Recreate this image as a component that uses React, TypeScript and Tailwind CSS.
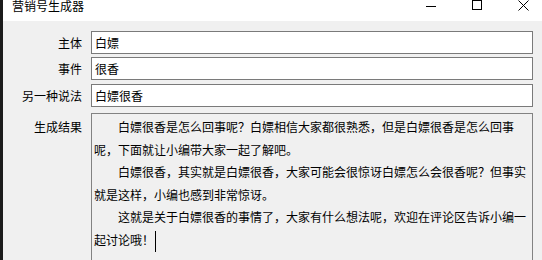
const font = { fontFamily: '"Noto Sans CJK SC", "Noto Sans", sans-serif' };

const lines: { text: string; indent: boolean }[] = [
  { text: "白嫖很香是怎么回事呢？白嫖相信大家都很熟悉，但是白嫖很香是怎么回事", indent: true },
  { text: "呢，下面就让小编带大家一起了解吧。", indent: false },
  { text: "白嫖很香，其实就是白嫖很香，大家可能会很惊讶白嫖怎么会很香呢？但事实", indent: true },
  { text: "就是这样，小编也感到非常惊讶。", indent: false },
  { text: "这就是关于白嫖很香的事情了，大家有什么想法呢，欢迎在评论区告诉小编一", indent: true },
  { text: "起讨论哦！", indent: false },
];

const fields = [
  { label: "主体", value: "白嫖", mt: "mt-[10px]" },
  { label: "事件", value: "很香", mt: "mt-[3px]" },
  { label: "另一种说法", value: "白嫖很香", mt: "mt-[4px]" },
];

function TitleBar() {
  return (
    <div className="flex h-[21px] shrink-0 items-start bg-white">
      <span className="pl-[9px] text-[12px] leading-[12px] text-black">营销号生成器</span>
      <div className="ml-auto mr-[-4px] flex">
        <div className="flex h-[12px] w-[46px] items-center justify-center">
          <svg width="10" height="10" viewBox="0 0 10 10">
            <line x1="0" y1="5.5" x2="10" y2="5.5" stroke="#000" strokeWidth="1" />
          </svg>
        </div>
        <div className="flex h-[10px] w-[46px] items-center justify-center">
          <svg width="10" height="10" viewBox="0 0 10 10">
            <rect x="0.5" y="0.5" width="9" height="9" fill="none" stroke="#000" strokeWidth="1" />
          </svg>
        </div>
        <div className="flex h-[11px] w-[46px] items-center justify-center">
          <svg width="11" height="11" viewBox="0 0 11 11">
            <path d="M0.5 0.5L10.5 10.5M10.5 0.5L0.5 10.5" stroke="#000" strokeWidth="1" />
          </svg>
        </div>
      </div>
    </div>
  );
}

export default function App() {
  return (
    <div className="flex h-[260px] w-[542px] overflow-hidden bg-[#f0f0f0]" style={font}>
      <div className="w-[3px] shrink-0 bg-[#1b1b1b]" />
      <div className="flex flex-1 flex-col">
        <TitleBar />
        <div className="flex flex-col pr-[9px] text-[12px] text-black">
          {fields.map((f) => (
            <div key={f.label} className={`flex items-center ${f.mt}`}>
              <span className="w-[79px] text-right leading-[23px]">{f.label}</span>
              <div className="ml-[9px] flex h-[23px] flex-1 items-center border border-[#7a7a7a] bg-white pl-[3px]">
                {f.value}
              </div>
            </div>
          ))}
          <div className="mt-[6px] flex items-start">
            <span className="w-[79px] pt-[3px] text-right leading-[22.6px]">生成结果</span>
            <div className="ml-[9px] h-[160px] flex-1 border border-[#828282] bg-[#f0f0f0] pl-[2px] pt-[2px]">
              {lines.map((l, i) => (
                <div
                  key={i}
                  className={`whitespace-nowrap leading-[22.6px] ${l.indent ? "pl-[24px]" : ""}`}
                >
                  {l.text}
                  {i === lines.length - 1 && (
                    <span className="ml-px inline-block h-[21px] w-px bg-black align-middle" />
                  )}
                </div>
              ))}
            </div>
          </div>
        </div>
      </div>
    </div>
  );
}
